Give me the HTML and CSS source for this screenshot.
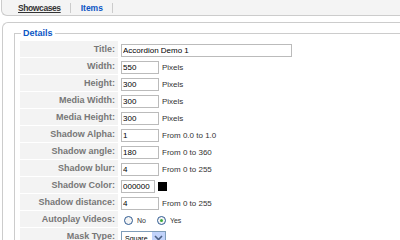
FILE: index.html
```html
<!DOCTYPE html>
<html lang="en">
<head>
  <meta charset="UTF-8">
  <title>Showcase</title>
  <link rel="stylesheet" href="styles.css">
</head>
<body>

  <div class="submenu">
    <a class="tab active" href="#">Showcases</a>
    <span class="sep"></span>
    <a class="tab" href="#">Items</a>
    <span class="sep"></span>
  </div>

  <div class="box">
    <fieldset class="details">
      <legend>Details</legend>
      <div class="admintable">
        <div class="key">Title:</div>
        <div class="val"><input class="text wide" value="Accordion Demo 1"></div>

        <div class="key">Width:</div>
        <div class="val"><input class="text" value="550"><span class="hint">Pixels</span></div>

        <div class="key">Height:</div>
        <div class="val"><input class="text" value="300"><span class="hint">Pixels</span></div>

        <div class="key">Media Width:</div>
        <div class="val"><input class="text" value="300"><span class="hint">Pixels</span></div>

        <div class="key">Media Height:</div>
        <div class="val"><input class="text" value="300"><span class="hint">Pixels</span></div>

        <div class="key">Shadow Alpha:</div>
        <div class="val"><input class="text" value="1"><span class="hint">From 0.0 to 1.0</span></div>

        <div class="key">Shadow angle:</div>
        <div class="val"><input class="text" value="180"><span class="hint">From 0 to 360</span></div>

        <div class="key">Shadow blur:</div>
        <div class="val"><input class="text" value="4"><span class="hint">From 0 to 255</span></div>

        <div class="key">Shadow Color:</div>
        <div class="val"><input class="text color" value="000000"><span class="swatch"></span></div>

        <div class="key">Shadow distance:</div>
        <div class="val"><input class="text" value="4"><span class="hint">From 0 to 255</span></div>

        <div class="key">Autoplay Videos:</div>
        <div class="val">
          <span class="radio"></span><span class="rlabel">No</span>
          <span class="radio checked"></span><span class="rlabel">Yes</span>
        </div>

        <div class="key">Mask Type:</div>
        <div class="val">
          <span class="select">Square<span class="arrow"><svg width="9" height="6" viewBox="0 0 9 6"><path d="M1 1 L4.5 4.5 L8 1" fill="none" stroke="#4d6185" stroke-width="1.6"/></svg></span></span>
        </div>
      </div>
    </fieldset>
  </div>

</body>
</html>
```

FILE: styles.css
```css
body {
  margin: 0;
  background: #fff;
  font-family: 'Liberation Sans', Arial, sans-serif;
  font-size: 8px;
  color: #333;
  overflow: hidden;
}

.submenu {
  display: flex;
  align-items: center;
  height: 15px;
  margin-left: 1px;
  background: #f4f4f4;
  border: 1px solid #ccc;
  border-top: none;
  border-right: none;
  border-radius: 0 0 0 6px;
  padding-left: 15px;
}

.tab {
  font-size: 8.5px;
  font-weight: bold;
  color: #0b55c4;
  text-decoration: none;
  padding: 0 1px;
}

.tab.active {
  color: #333;
  text-decoration: underline;
  letter-spacing: -0.4px;
}

.sep {
  width: 1px;
  height: 10px;
  background: #ccc;
  margin: 0 9px 0 8px;
}

.box {
  margin: 6px 0 0 2px;
  border: 1px solid #ccc;
  border-right: none;
  border-bottom: none;
  border-radius: 6px 0 0 0;
  padding: 5px 0 0 11px;
  height: 300px;
}

.details {
  margin: 0;
  padding: 0 0 0 5px;
  border: 1px solid #ccc;
  border-right: none;
}

.details legend {
  color: #0b55c4;
  font-weight: bold;
  font-size: 9px;
  padding: 0 2px;
  margin-left: 1px;
}

.admintable {
  display: grid;
  grid-template-columns: 98px 1fr;
  grid-auto-rows: 16px;
  row-gap: 1px;
  column-gap: 3px;
  margin-top: 3px;
}

.key {
  background: #f3f3f3;
  color: #777;
  font-size: 9px;
  font-weight: bold;
  text-align: right;
  padding-right: 3px;
  line-height: 16px;
}

.val {
  display: flex;
  align-items: center;
}

.text {
  box-sizing: border-box;
  width: 38px;
  height: 13px;
  margin-top: 2px;
  padding: 0 1px;
  border: 1px solid #bbb;
  font-family: 'Liberation Sans', Arial, sans-serif;
  font-size: 8px;
  color: #000;
  background: #fff;
}

.text.wide {
  width: 171px;
}

.text.color {
  width: 34px;
}

.hint {
  margin: 2px 0 0 3px;
  font-size: 8px;
  color: #333;
}

.swatch {
  width: 9px;
  height: 9px;
  margin-top: 2px;
  background: #000;
  margin-left: 3px;
}

.radio {
  box-sizing: border-box;
  width: 9px;
  height: 9px;
  margin-top: 2px;
  border: 1px solid #2f5b92;
  border-radius: 50%;
  background: #f4f4f4;
  margin-left: 3px;
  position: relative;
}

.radio.checked::after {
  content: "";
  position: absolute;
  left: 2px;
  top: 2px;
  width: 3px;
  height: 3px;
  border-radius: 50%;
  background: #3bab3b;
}

.rlabel {
  font-size: 7px;
  color: #333;
  margin: 2px 8px 0 4px;
}

.select {
  box-sizing: border-box;
  display: flex;
  align-items: center;
  justify-content: space-between;
  width: 45px;
  height: 14px;
  margin-top: 4px;
  padding-left: 3px;
  border: 1px solid #7f9db9;
  font-size: 7px;
  color: #000;
  background: #fff;
}

.arrow {
  display: flex;
  align-items: center;
  justify-content: center;
  width: 13px;
  height: 12px;
  background: #c1d3fb;
  border-left: 1px solid #fff;
}
```
